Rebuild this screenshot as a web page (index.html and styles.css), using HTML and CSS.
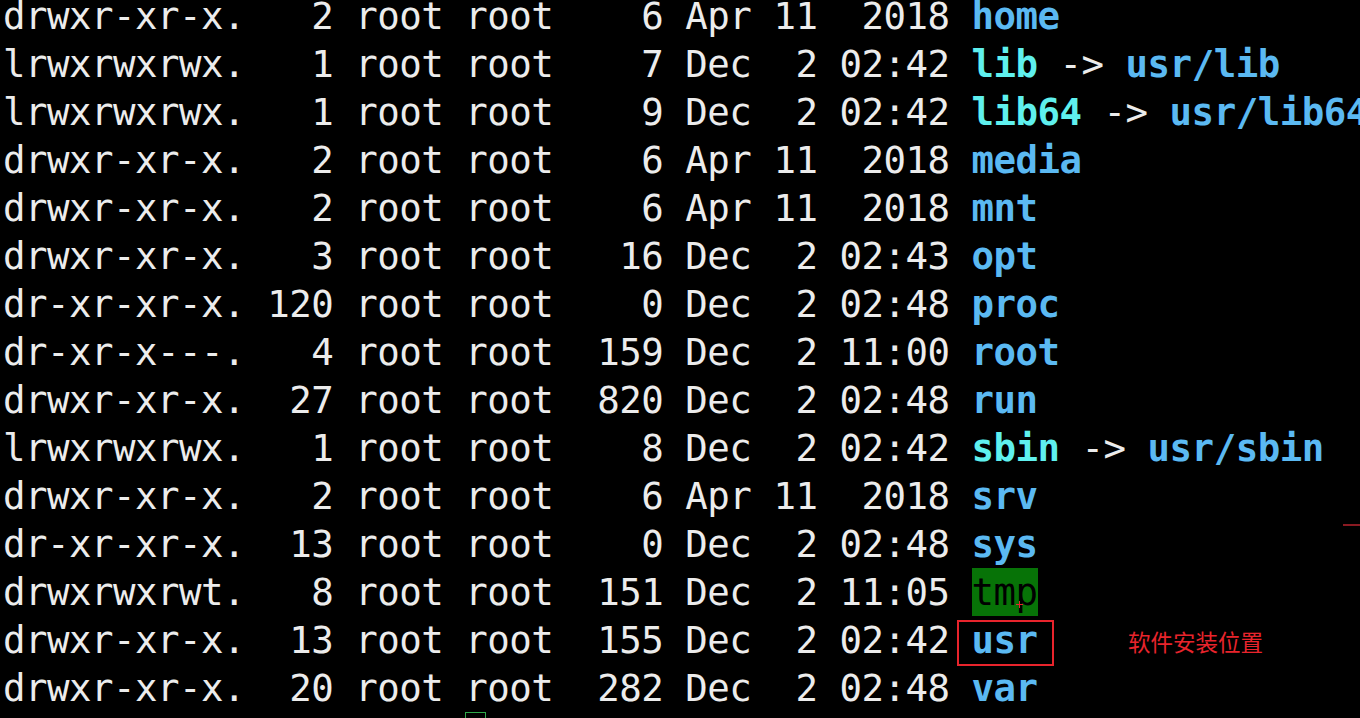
FILE: index.html
```html
<!DOCTYPE html>
<html lang="zh">
<head>
<meta charset="utf-8">
<link rel="stylesheet" href="styles.css">
<title>ls -l /</title>
</head>
<body>
<div class="term">
<div class="row">drwxr-xr-x.   2 root root    6 Apr 11  2018 <span class="dir">home</span></div>
<div class="row">lrwxrwxrwx.   1 root root    7 Dec  2 02:42 <span class="ln">lib</span> -&gt; <span class="dir">usr/lib</span></div>
<div class="row">lrwxrwxrwx.   1 root root    9 Dec  2 02:42 <span class="ln">lib64</span> -&gt; <span class="dir">usr/lib64</span></div>
<div class="row">drwxr-xr-x.   2 root root    6 Apr 11  2018 <span class="dir">media</span></div>
<div class="row">drwxr-xr-x.   2 root root    6 Apr 11  2018 <span class="dir">mnt</span></div>
<div class="row">drwxr-xr-x.   3 root root   16 Dec  2 02:43 <span class="dir">opt</span></div>
<div class="row">dr-xr-xr-x. 120 root root    0 Dec  2 02:48 <span class="dir">proc</span></div>
<div class="row">dr-xr-x---.   4 root root  159 Dec  2 11:00 <span class="dir">root</span></div>
<div class="row">drwxr-xr-x.  27 root root  820 Dec  2 02:48 <span class="dir">run</span></div>
<div class="row">lrwxrwxrwx.   1 root root    8 Dec  2 02:42 <span class="ln">sbin</span> -&gt; <span class="dir">usr/sbin</span></div>
<div class="row">drwxr-xr-x.   2 root root    6 Apr 11  2018 <span class="dir">srv</span></div>
<div class="row">dr-xr-xr-x.  13 root root    0 Dec  2 02:48 <span class="dir">sys</span></div>
<div class="row">drwxrwxrwt.   8 root root  151 Dec  2 11:05 <span class="sticky">tmp</span></div>
<div class="row">drwxr-xr-x.  13 root root  155 Dec  2 02:42 <span class="dir">usr</span></div>
<div class="row">drwxr-xr-x.  20 root root  282 Dec  2 02:48 <span class="dir">var</span></div>
</div>
<div class="mark-box"></div>
<div class="note">软件安装位置</div>
<div class="cursor-cross"></div>
<div class="edge-line"></div>
<div class="cursor-box"></div>
</body>
</html>
```
FILE: styles.css
```css
html, body {
  margin: 0;
  padding: 0;
  background: #000;
  width: 1360px;
  height: 718px;
  overflow: hidden;
}
body {
  position: relative;
}
.term {
  margin-top: -8px;
  padding-left: 3px;
  font-family: "DejaVu Sans Mono", "Liberation Mono", monospace;
  font-size: 37.4px;
  letter-spacing: -0.5px;
  line-height: 48px;
  color: #ececec;
}
.row {
  height: 48px;
  white-space: pre;
}
.dir {
  color: #5bb9f2;
  font-weight: bold;
}
.ln {
  color: #5ff0ee;
  font-weight: bold;
}
.sticky {
  display: inline-block;
  background: #077307;
  color: #000;
  height: 48px;
  line-height: 48px;
  vertical-align: top;
}
.mark-box {
  position: absolute;
  left: 957px;
  top: 620px;
  width: 93px;
  height: 42px;
  border: 2px solid #e8242c;
}
.note {
  position: absolute;
  left: 1128px;
  top: 626px;
  font-family: "Noto Sans CJK SC", sans-serif;
  font-size: 22.5px;
  line-height: 30px;
  color: #e8242c;
}
.cursor-cross {
  position: absolute;
  left: 1016px;
  top: 601px;
  width: 7px;
  height: 7px;
  background:
    linear-gradient(#e8242c, #e8242c) center / 7px 1px no-repeat,
    linear-gradient(#e8242c, #e8242c) center / 1px 7px no-repeat;
}
.edge-line {
  position: absolute;
  left: 1343px;
  top: 524px;
  width: 17px;
  height: 2px;
  background: #8a1a22;
}
.cursor-box {
  position: absolute;
  left: 465px;
  top: 712px;
  width: 19px;
  height: 10px;
  border: 1px solid #2fa84a;
}
```
